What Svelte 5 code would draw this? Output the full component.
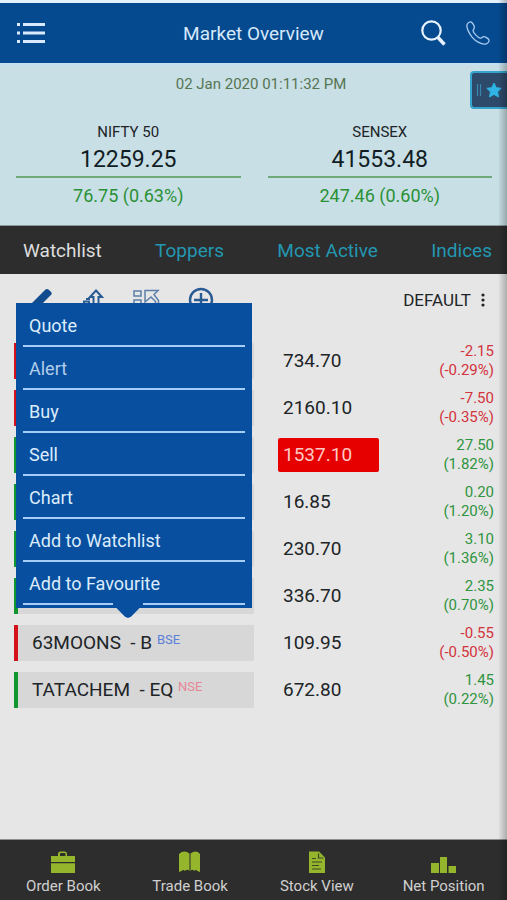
<script lang="ts">
	// Tabs above the list
	const tabs = ['Watchlist', 'Toppers', 'Most Active', 'Indices'];

	const indexes = [
		{ name: 'NIFTY 50', value: '12259.25', change: '76.75 (0.63%)' },
		{ name: 'SENSEX', value: '41553.48', change: '247.46 (0.60%)' }
	];

	// Rows under the open menu have no label
	const stocks = [
		{ symbol: '', exchange: '', price: '734.70', change: '-2.15', percent: '(-0.29%)' },
		{ symbol: '', exchange: '', price: '2160.10', change: '-7.50', percent: '(-0.35%)' },
		{ symbol: '', exchange: '', price: '1537.10', change: '27.50', percent: '(1.82%)', tick: true },
		{ symbol: '', exchange: '', price: '16.85', change: '0.20', percent: '(1.20%)' },
		{ symbol: '', exchange: '', price: '230.70', change: '3.10', percent: '(1.36%)' },
		{ symbol: '', exchange: '', price: '336.70', change: '2.35', percent: '(0.70%)' },
		{ symbol: '63MOONS \u00a0- B', exchange: 'BSE', price: '109.95', change: '-0.55', percent: '(-0.50%)' },
		{ symbol: 'TATACHEM \u00a0- EQ', exchange: 'NSE', price: '672.80', change: '1.45', percent: '(0.22%)' }
	];

	const actions = ['Quote', 'Alert', 'Buy', 'Sell', 'Chart', 'Add to Watchlist', 'Add to Favourite'];

	const pages = ['Order Book', 'Trade Book', 'Stock View', 'Net Position'];

	let currentTab = $state('Watchlist');
</script>

<div class="app">
	<header class="topBar">
		<button class="iconButton" aria-label="Menu">
			<svg width="28" height="22" viewBox="0 0 28 22" fill="#d9eaff">
				<path d="M0 1h3v3H0zM6 1h22v3H6zM0 9.500h3v3H0zM6 9.500h22v3H6zM0 18h3v3H0zM6 18h22v3H6z" />
			</svg>
		</button>
		<h1>Market Overview</h1>
		<div class="topActions">
			<button class="iconButton" aria-label="Search">
				<svg width="25" height="26" viewBox="0 0 25 26" fill="none" stroke="#e8f3ff">
					<circle cx="10.5" cy="10.5" r="9.2" stroke-width="2.2" />
					<path d="M17 17.5l6.5 7" stroke-width="3.4" />
				</svg>
			</button>
			<button class="iconButton" aria-label="Call">
				<svg width="24" height="24" viewBox="0 0 24 24" fill="none" stroke="#a9cbf2" stroke-width="1.3" stroke-linejoin="round">
					<path d="M1.2 3.2C2 1.8 3.6.8 4.9 1c1.4.2 3.4 3.7 3.5 5.2.1 1.6-1.5 2.2-1.3 3.6.3 2.2 4.8 6.9 7.1 7.4 1.5.3 2-1.5 3.6-1.5 1.6 0 4.9 2 5.2 3.4.3 1.4-1.3 3.2-2.8 3.7C15.5 24.2 9.3 19.9 6.3 16.3 3.3 12.7-.2 6.5 1.2 3.2z" />
				</svg>
			</button>
		</div>
	</header>

	<section class="overview">
		<p class="date">02 Jan 2020 01:11:32 PM</p>
		<div class="indexes">
			{#each indexes as index}
				<div class="index">
					<h2>{index.name}</h2>
					<p class="value">{index.value}</p>
					<p class="indexChange">{index.change}</p>
				</div>
			{/each}
		</div>
		<button class="favTab" aria-label="Favourites">
			<svg width="30" height="18" viewBox="0 0 30 18">
				<path d="M2.5 3v12M5.5 3v12" stroke="#3787ab" stroke-width="1.2" />
				<path
					d="M19 2l2.200 4.700 5 .6-3.700 3.500 1 5.100L19 13.400l-4.500 2.500 1-5.100-3.700-3.500 5-.6z"
					fill="#2fb4e6"
					stroke="#2fb4e6"
					stroke-linejoin="round"
				/>
			</svg>
		</button>
	</section>

	<nav class="tabs">
		{#each tabs as tab}
			<button class:active={currentTab === tab} onclick={() => (currentTab = tab)}>{tab}</button>
		{/each}
	</nav>

	<main>
		<div class="toolbar">
			<button class="iconButton" aria-label="Edit">
				<svg width="24" height="24" viewBox="0 0 24 24" fill="#114c8e">
					<path d="M17.5 1.5q1.500-1.200 3 0l2.600 2.600q1.200 1.400 0 2.700L8 22l-7 2 1.500-7.500z" />
				</svg>
			</button>
			<button class="iconButton" aria-label="Sort">
				<svg width="24" height="24" viewBox="0 0 24 24" fill="none" stroke="#285a94" stroke-width="2">
					<path d="M16 2.500l6 6.500h-3.500v12h-5V9H10z" />
					<path d="M4 13.500h5V21H4zM6 11h4" />
				</svg>
			</button>
			<button class="iconButton" aria-label="Arrange">
				<svg width="28" height="24" viewBox="0 0 28 24" fill="none" stroke="#5c7fa9" stroke-width="1.5">
					<path d="M2 3h7v5H2zM2 12h7v5H2zM13 2.500h13l-4 4 4.500 6v6h-3v-5l-4.500-4.500-6 5z" />
				</svg>
			</button>
			<button class="iconButton" aria-label="Add">
				<svg width="26" height="26" viewBox="0 0 26 26" fill="none" stroke="#285a94" stroke-width="2.4">
					<circle cx="13" cy="13" r="11" />
					<path d="M13 6v14M6 13h14" />
				</svg>
			</button>
			<button class="listName">
				DEFAULT
				<svg width="4" height="14" viewBox="0 0 4 14" fill="#222">
					<circle cx="2" cy="2" r="1.6" />
					<circle cx="2" cy="7" r="1.6" />
					<circle cx="2" cy="12" r="1.6" />
				</svg>
			</button>
		</div>

		<table>
			<tbody>
				{#each stocks as stock}
					<tr class:down={stock.change.startsWith('-')}>
						<td class="nameCell">
							<div class="name">
								{stock.symbol}
								<span class="exchange" class:nse={stock.exchange === 'NSE'}>{stock.exchange}</span>
							</div>
						</td>
						<td class="priceCell"><div class="price" class:tick={stock.tick}>{stock.price}</div></td>
						<td class="change">{stock.change}<br />{stock.percent}</td>
					</tr>
				{/each}
			</tbody>
		</table>

		<div class="menu">
			{#each actions as action}
				<button>{action}</button>
			{/each}
		</div>
	</main>

	<footer>
		{#each pages as page, i}
			<a href="#{page.toLowerCase().replace(' ', '-')}">
				<svg width="26" height="22" viewBox="0 0 26 22" fill="#94b52c">
					{#if i === 0}
						<path d="M1 5h7V3q0-2.500 2.500-2.500h4Q17 .5 17 3v2h8v6H1zM10 5h5.500V3q0-1-1-1H11q-1 0-1 1zM1 12.200h24V22H1z" />
					{:else if i === 1}
						<path d="M2 3Q7-1.500 12.500 2.500V20q-2-2.500-4.500 0-1.500-2-3.500 0L2 21zM13.500 2.500Q19-1.500 23 3v18l-2.500-1q-2-2-3.500 0-1.500-2.500-3.500 0z" />
					{:else if i === 2}
						<path d="M5 .5h10l6 6V22H5z" />
						<path d="M14.500 2.500v4.500h5M8 7.500h4M8 11h10M8 14.500h7M8 18h9" fill="none" stroke="#3f4b24" stroke-width="1.2" />
					{:else}
						<path d="M0 12h8v10H0zM9 6h7v16H9zM17.500 15H25v7h-7.500z" />
					{/if}
				</svg>
				{page}
			</a>
		{/each}
	</footer>
</div>

<style>
	:global(body) {
		margin: 0;
		background: #e6e6e6;
	}

	.app {
		position: relative;
		display: flex;
		flex-direction: column;
		min-height: 100vh;
		font-family: Roboto, sans-serif;
		color: #202427;
	}

	/* shade along the right edge of the screen */
	.app::after {
		content: '';
		position: absolute;
		inset: 0 0 0 auto;
		width: 9px;
		pointer-events: none;
		background: linear-gradient(to right, transparent, rgba(0, 0, 0, 0.25));
	}

	h1,
	h2,
	p {
		margin: 0;
		font-weight: 400;
	}

	button {
		padding: 0;
		border: none;
		background: none;
		font: inherit;
		color: inherit;
		cursor: pointer;
	}

	svg {
		display: block;
	}

	.topBar {
		display: grid;
		grid-template-columns: 1fr auto 1fr;
		align-items: center;
		height: 60px;
		padding: 0 17px;
		border-top: 3px solid #e3f1fa;
		background: #054a8f;
		color: #d6e8fb;
	}

	.topBar h1 {
		font-size: 19px;
	}

	.topActions {
		display: flex;
		align-items: center;
		justify-content: flex-end;
		gap: 20px;
	}

	.overview {
		position: relative;
		padding: 10px 15px 17px 16px;
		border-top: 2px solid #c4e0f2;
		border-bottom: 1px solid #8b9699;
		background: #c8dfe5;
		text-align: center;
	}

	.date {
		padding-left: 14px;
		font-size: 15px;
		line-height: 18px;
		color: #567553;
	}

	.indexes {
		display: grid;
		grid-template-columns: 1fr 1fr;
		gap: 27px;
		padding-top: 30px;
	}

	.index h2 {
		font-size: 15px;
		line-height: 18px;
	}

	.value {
		padding: 5px 0 2px;
		border-bottom: 2px solid #6faa7b;
		font-size: 23px;
		line-height: 28px;
		color: #111d24;
	}

	.indexChange {
		padding-top: 6px;
		font-size: 18px;
		line-height: 24px;
		color: #2a9136;
	}

	.favTab {
		position: absolute;
		top: 6px;
		right: 0;
		width: 37px;
		height: 38px;
		padding-left: 3px;
		border: 2px solid #35a4cf;
		border-right: none;
		border-radius: 4px 0 0 4px;
		background: #2e4a6b;
	}

	.tabs {
		display: flex;
		align-items: center;
		justify-content: space-between;
		height: 48px;
		padding: 0 15px 0 23px;
		background: #2d2d2d;
		font-size: 19px;
		color: #2397b2;
	}

	.tabs .active {
		color: #dedede;
	}

	main {
		position: relative;
		flex: 1;
		padding: 0 13px 0 14px;
	}

	.toolbar {
		display: flex;
		align-items: center;
		gap: 28px;
		height: 52px;
		padding: 0 9px 11px 14px;
	}

	.listName {
		display: flex;
		align-items: center;
		gap: 10px;
		margin-left: auto;
		font-size: 17px;
	}

	table {
		width: 100%;
		border-collapse: collapse;
		table-layout: fixed;
	}

	tr {
		height: 47px;
	}

	td {
		padding: 0;
	}

	.nameCell {
		width: 50%;
	}

	.name {
		height: 36px;
		padding-left: 14px;
		border-left: 4px solid #11962f;
		background: #d7d7d7;
		font-size: 19px;
		line-height: 36px;
	}

	.down .name {
		border-color: #d3101c;
	}

	.exchange {
		font-size: 13px;
		line-height: 0;
		vertical-align: 5px;
		color: #5a80d8;
	}

	.exchange.nse {
		color: #e58795;
	}

	.priceCell {
		width: 27%;
		padding-left: 24px;
	}

	.price {
		width: 96px;
		padding-left: 5px;
		border-radius: 2px;
		font-size: 19px;
		line-height: 34px;
	}

	.price.tick {
		background: #e60000;
		color: #ffc9c4;
	}

	.change {
		font-size: 15px;
		line-height: 19px;
		text-align: right;
		color: #2f9440;
	}

	.down .change {
		color: #d3333c;
	}

	.menu {
		position: absolute;
		top: 29px;
		left: 16px;
		width: 222px;
		padding: 1px 7px 3px;
		background: #08509f;
	}

	.menu button {
		display: block;
		width: 100%;
		height: 43px;
		padding: 2px 0 0 6px;
		border-bottom: 2px solid #a5cdf7;
		font-size: 18px;
		text-align: left;
		color: #dcecfc;
	}

	.menu button:nth-child(2) {
		color: #b3cdea;
	}

	/* pointer towards the selected row */
	.menu::after {
		content: '';
		position: absolute;
		top: calc(100% - 7px);
		left: calc(50% - 21px);
		width: 30px;
		height: 17px;
		background: #08509f;
		clip-path: polygon(0 0, 100% 0, 100% 20%, 60% 92%, 50% 100%, 40% 92%, 0 20%);
	}

	footer {
		display: grid;
		grid-template-columns: repeat(4, 1fr);
		height: 60px;
		border-top: 1px solid #8e8e8e;
		background: #2d2d2d;
	}

	footer a {
		display: flex;
		flex-direction: column;
		align-items: center;
		gap: 4px;
		padding-top: 11px;
		font-size: 15px;
		line-height: 18px;
		text-decoration: none;
		color: #d0d0d0;
	}
</style>
